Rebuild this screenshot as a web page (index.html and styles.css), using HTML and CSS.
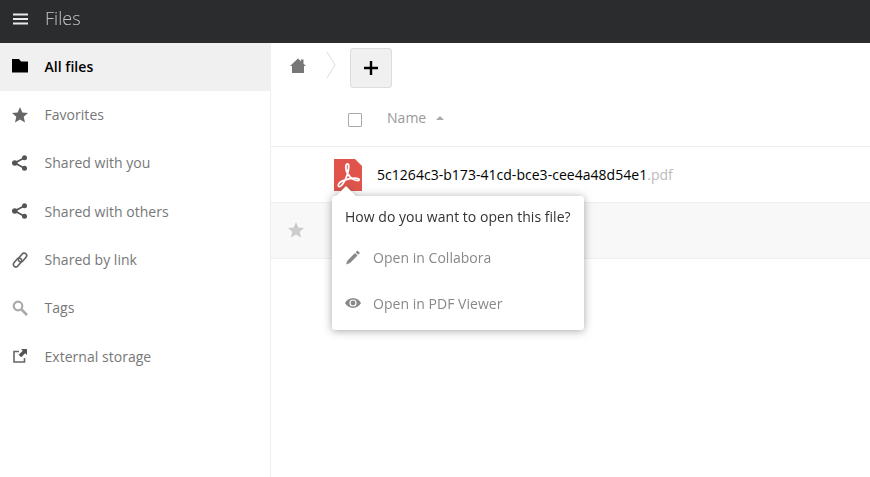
FILE: index.html
```html
<!DOCTYPE html>
<html lang="en">
<head>
<meta charset="utf-8">
<title>Files</title>
<link rel="stylesheet" href="styles.css">
</head>
<body>
<header class="topbar">
  <svg class="menu-icon" width="15" height="12" viewBox="0 0 15 12"><path d="M0 .5h15v2H0zM0 5h15v2H0zM0 9.500h15v2H0z" fill="#fff" opacity=".9"/></svg>
  <span class="app-name">Files</span>
</header>
<div class="shell">
  <nav class="sidebar">
    <a class="nav-item active">
      <svg class="nav-icon" viewBox="0 0 16 16"><path d="M0 1h7l2 2.500h7V14.500H0z" fill="#000"/></svg>
      <span>All files</span>
    </a>
    <a class="nav-item">
      <svg class="nav-icon" viewBox="0 0 16 16"><path d="M8 0l2.300 5.400 5.700.5-4.300 3.800 1.300 5.800L8 12.500l-5 3 1.300-5.800L0 5.900l5.700-.5z" fill="#666"/></svg>
      <span>Favorites</span>
    </a>
    <a class="nav-item">
      <svg class="nav-icon" viewBox="0 0 16 16"><g fill="#555"><circle cx="12.500" cy="2.800" r="2.500"/><circle cx="2.800" cy="8" r="2.800"/><circle cx="12.500" cy="13.200" r="2.500"/></g><path d="M12.500 2.800L2.800 8l9.700 5.200" fill="none" stroke="#555" stroke-width="1.800"/></svg>
      <span>Shared with you</span>
    </a>
    <a class="nav-item">
      <svg class="nav-icon" viewBox="0 0 16 16"><g fill="#555"><circle cx="12.500" cy="2.800" r="2.500"/><circle cx="2.800" cy="8" r="2.800"/><circle cx="12.500" cy="13.200" r="2.500"/></g><path d="M12.500 2.800L2.800 8l9.700 5.200" fill="none" stroke="#555" stroke-width="1.800"/></svg>
      <span>Shared with others</span>
    </a>
    <a class="nav-item">
      <svg class="nav-icon" viewBox="0 0 16 16"><g fill="none" stroke="#666" stroke-width="1.700"><rect x="8" y="0.500" width="5" height="10" rx="2.500" transform="rotate(40 10.500 5.500)"/><rect x="3" y="5.500" width="5" height="10" rx="2.500" transform="rotate(40 5.500 10.500)"/></g></svg>
      <span>Shared by link</span>
    </a>
    <a class="nav-item">
      <svg class="nav-icon" viewBox="0 0 16 16"><circle cx="6" cy="6" r="4.300" fill="none" stroke="#aaa" stroke-width="2.200"/><path d="M9.500 9.500L15 15" stroke="#aaa" stroke-width="2.600"/></svg>
      <span>Tags</span>
    </a>
    <a class="nav-item">
      <svg class="nav-icon" viewBox="0 0 16 16"><path d="M7 3.500H2v10.500h10.500V10" fill="none" stroke="#666" stroke-width="1.600"/><path d="M9 1h6v6l-1.800-1.700-4 4-2.500-2.500 4-4z" fill="#555"/></svg>
      <span>External storage</span>
    </a>
  </nav>
  <main class="content">
    <div class="controls">
      <svg class="home-icon" width="16" height="16" viewBox="0 0 16 16"><path d="M8 .5l3 2.700V1.500h2.500v4.200L16 8h-2v7H2V8H0z" fill="#777"/></svg>
      <svg class="crumb" width="10" height="30" viewBox="0 0 10 30"><path d="M1 2l8 13-8 13" fill="none" stroke="#ddd"/></svg>
      <button class="add-button" type="button">
        <svg width="16" height="16" viewBox="0 0 16 16"><path d="M6.800 1h2.400v5.800H15v2.400H9.200V15H6.800V9.200H1V6.800h5.800z" fill="#000"/></svg>
      </button>
    </div>
    <div class="file-head">
      <span class="check"></span>
      <span class="col-name">Name</span>
      <span class="sort-arrow"></span>
    </div>
    <div class="file-row">
      <svg class="pdf-icon" width="28" height="32" viewBox="0 0 28 32">
        <path d="M0 0h21l7 7v25H0z" fill="#e0544c"/>
        <path d="M13.500 5C12 5 11.500 7 12 10c.5 3.500 2.500 6.500 5 9 2.500 1.500 6 3 7.500 2.500 1.500-.5.500-2-1.500-2.200-4-.3-10 .7-14.500 2.500C5.500 23 3.500 26 4.500 27.200 5.700 28.500 8 26.500 10 23c2-3.500 4.500-10 4.700-15 .1-2-.2-3-1.200-3z" fill="none" stroke="#fff" stroke-width="1.800"/>
      </svg>
      <span class="file-name">5c1264c3-b173-41cd-bce3-cee4a48d54e1<span class="file-ext">.pdf</span></span>
    </div>
    <div class="file-row selected">
      <svg class="row-star" width="16" height="16" viewBox="0 0 16 16"><path d="M8 0l2.300 5.400 5.700.5-4.300 3.800 1.300 5.800L8 12.500l-5 3 1.300-5.800L0 5.900l5.700-.5z" fill="#ccc"/></svg>
    </div>
    <div class="popover">
      <div class="popover-title">How do you want to open this file?</div>
      <a class="popover-item">
        <svg width="16" height="16" viewBox="0 0 16 16"><path d="M12.500 1.500l2.500 2.500-1.800 1.800-2.500-2.500zM10 4l2.500 2.500-7.500 7.500-4 1.500 1.500-4z" fill="#888"/></svg>
        <span>Open in Collabora</span>
      </a>
      <a class="popover-item">
        <svg width="16" height="16" viewBox="0 0 16 16"><path d="M8 3C4.500 3 1.500 5.200 0 8c1.500 2.800 4.500 5 8 5s6.500-2.200 8-5c-1.500-2.800-4.500-5-8-5z" fill="#888"/><circle cx="8" cy="8" r="3.600" fill="#fff"/><circle cx="8" cy="8" r="2.400" fill="#888"/></svg>
        <span>Open in PDF Viewer</span>
      </a>
    </div>
  </main>
</div>
</body>
</html>
```
FILE: styles.css
```css
* { box-sizing: border-box; }
html, body { height: 100%; }
body {
  margin: 0;
  overflow: hidden;
  background: #fff;
  color: #000;
  font-family: "Open Sans", "Noto Sans", sans-serif;
  font-size: 14px;
  letter-spacing: .03px;
}
.topbar {
  display: flex;
  align-items: center;
  height: 43px;
  background: #2b2c2e;
  padding: 0 0 8px 13px;
}
.menu-icon { margin-top: 3px; }
.app-name {
  margin-left: 17px;
  color: #fff;
  opacity: .7;
  font-size: 18px;
  font-weight: 300;
}
.shell { display: flex; height: 434px; }
.sidebar {
  flex: 0 0 271px;
  border-right: 1px solid #eee;
}
.nav-item {
  display: flex;
  align-items: center;
  height: 48.350px;
  padding: 0 0 2px 12px;
  color: #777;
}
.nav-icon { width: 16px; height: 16px; margin-right: 16.500px; }
.nav-item.active {
  background: #f0f0f0;
  color: #000;
  font-weight: 600;
}
.content { position: relative; flex: 1; }
.controls {
  display: flex;
  align-items: center;
  height: 44px;
  padding-left: 19px;
}
.home-icon { margin-top: 1px; }
.crumb { margin: 0 0 0 20px; }
.add-button {
  display: flex;
  align-items: center;
  justify-content: center;
  width: 42px;
  height: 40px;
  margin: 5px 0 0 14px;
  padding: 0;
  background: #f0f0f0;
  border: 1px solid #ddd;
  border-radius: 3px;
}
.file-head {
  display: flex;
  align-items: center;
  height: 60px;
  padding: 4px 0 0 77px;
  border-bottom: 1px solid #eee;
  color: #999;
}
.check {
  width: 14px;
  height: 14px;
  margin-top: 2px;
  border: 1px solid #aaa;
  border-radius: 1px;
  background: #fff;
}
.col-name { margin: -2px 0 0 25px; }
.sort-arrow {
  margin: -2px 0 0 10px;
  border: 4.500px solid transparent;
  border-top: 0;
  border-bottom: 4px solid #aaa;
}
.file-row {
  display: flex;
  align-items: center;
  height: 56px;
  border-bottom: 1px solid #eee;
  padding-left: 63px;
}
.file-row.selected { background: #f8f8f8; padding-left: 17px; }
.row-star { margin-top: -2px; }
.file-name { margin-left: 15px; }
.file-ext { color: #bbb; }
.popover {
  position: absolute;
  left: 61px;
  top: 153px;
  width: 252px;
  height: 134px;
  padding: 11px 13px;
  background: #fff;
  border-radius: 3px;
  filter: drop-shadow(0 1px 4px rgba(77, 77, 77, .5));
  color: #333;
}
.popover::before {
  content: "";
  position: absolute;
  left: 4px;
  top: -10px;
  border: 10px solid transparent;
  border-top: 0;
  border-bottom: 10px solid #fff;
}
.popover-title { height: 27px; line-height: 20px; }
.popover-item {
  display: flex;
  align-items: center;
  height: 46px;
  color: #888;
}
.popover-item svg { margin-right: 12px; }
```
